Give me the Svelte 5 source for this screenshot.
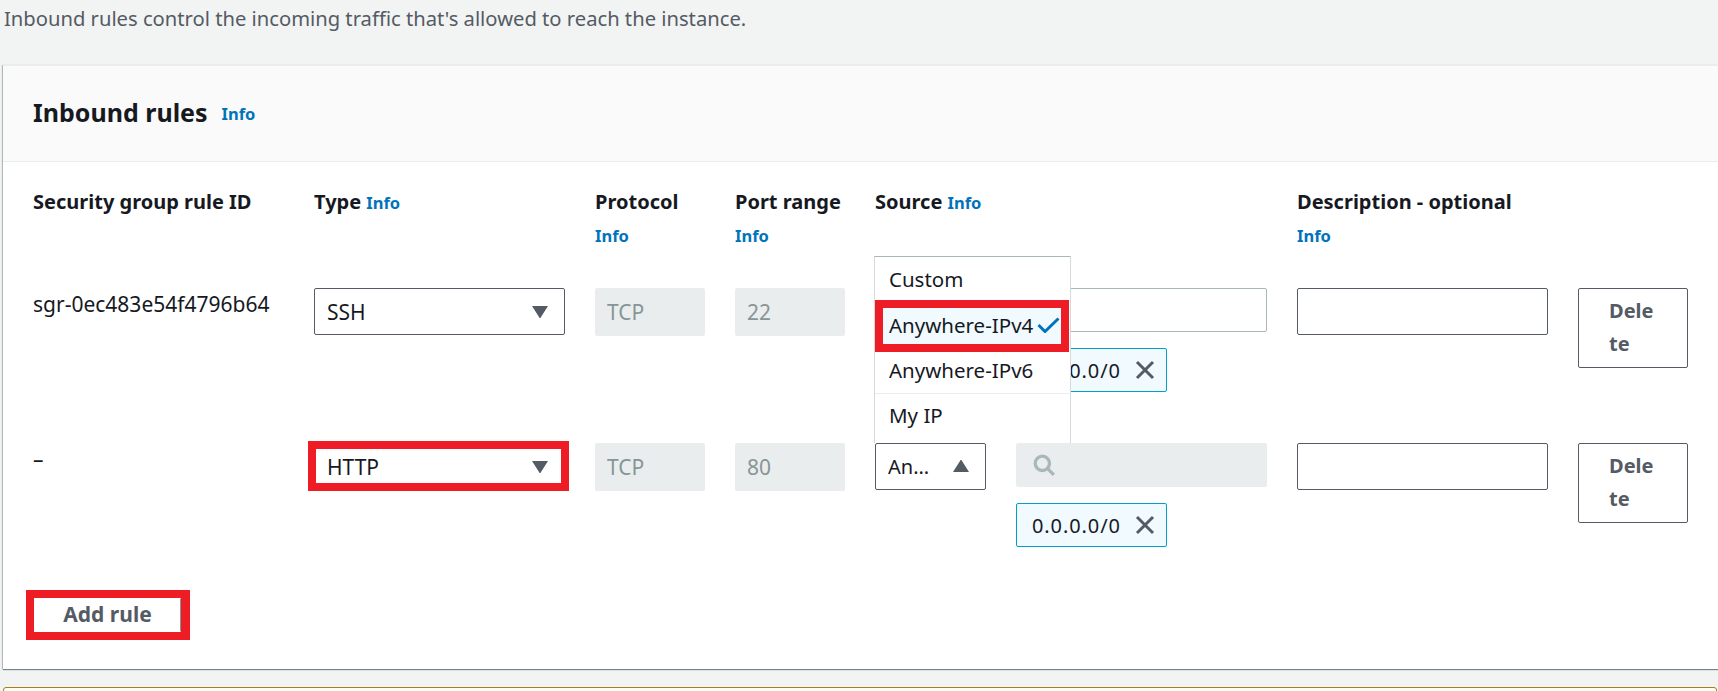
<script>
  const cols = [
    { label: 'Security group rule ID' },
    { label: 'Type', info: 'inline' },
    { label: 'Protocol', info: 'below' },
    { label: 'Port range', info: 'below' },
    { label: 'Source', info: 'inline' },
    { label: 'Description - optional', info: 'below' },
    { label: '' }
  ]

  const rules = [
    { id: 'sgr-0ec483e54f4796b64', type: 'SSH', port: '22', open: false, marked: false },
    { id: '–', type: 'HTTP', port: '80', open: true, marked: true }
  ]

  const sources = ['Custom', 'Anywhere-IPv4', 'Anywhere-IPv6', 'My IP']
</script>

<main class="page">
  <p class="intro">Inbound rules control the incoming traffic that's allowed to reach the instance.</p>

  <section class="card">
    <header class="card-head">
      <h2>Inbound rules</h2>
      <a class="info" href="#info">Info</a>
    </header>

    <div class="card-body">
      <div class="grid heads">
        {#each cols as col}
          <div class="col-head">
            <span class="col-label">{col.label}</span>
            {#if col.info === 'inline'}
              <a class="info" href="#info">Info</a>
            {:else if col.info === 'below'}
              <a class="info below" href="#info">Info</a>
            {/if}
          </div>
        {/each}
      </div>

      {#each rules as rule}
        <div class="grid rule">
          <div class="rule-id">{rule.id}</div>

          <div class="type-cell">
            <button class="select" type="button">
              <span>{rule.type}</span>
              <svg class="caret" viewBox="0 0 16 13" aria-hidden="true"><path d="M0 1h16L9 12a1 1 0 0 1-2 0z" /></svg>
            </button>
            {#if rule.marked}<span class="mark mark-type"></span>{/if}
          </div>

          <div class="readonly">TCP</div>
          <div class="readonly">{rule.port}</div>

          <div class="source">
            <div class="source-select">
              <button class="select source-btn" type="button">
                {#if rule.open}
                  <span>An...</span>
                  <svg class="caret" viewBox="0 0 16 13" aria-hidden="true"><path d="M0 12h16L9 1a1 1 0 0 0-2 0z" /></svg>
                {/if}
              </button>
              {#if rule.open}
                <ul class="menu">
                  {#each sources as source}
                    <li class:selected={source === 'Anywhere-IPv4'}>
                      {source}
                      {#if source === 'Anywhere-IPv4'}
                        <svg class="check" viewBox="0 0 23 16" aria-hidden="true"><path d="M1.5 8l6.5 6.5L21.5 1.5" /></svg>
                        <span class="mark mark-option"></span>
                      {/if}
                    </li>
                  {/each}
                </ul>
              {/if}
            </div>

            <div class="source-values">
              <div class="search" class:disabled={rule.open}>
                {#if rule.open}
                  <svg class="search-icon" viewBox="0 0 20 20" aria-hidden="true">
                    <circle cx="8.5" cy="8.5" r="6.5" />
                    <path d="M13.5 13.5L19 19" />
                  </svg>
                {/if}
              </div>
              <div class="token">
                <span>0.0.0.0/0</span>
                <svg class="dismiss" viewBox="0 0 20 20" aria-hidden="true"><path d="M2 2l16 16M18 2L2 18" /></svg>
              </div>
            </div>
          </div>

          <input class="description" type="text" aria-label="Description" />
          <button class="delete" type="button">Delete</button>
        </div>
      {/each}

      <div class="add-wrap">
        <button class="add" type="button">Add rule</button>
        <span class="mark mark-add"></span>
      </div>
    </div>
  </section>

  <div class="flash"></div>
</main>

<style>
  :global(body) {
    margin: 0;
    background: #f2f3f3;
  }

  .page {
    height: 691px;
    overflow: hidden;
    padding: 0 1px 0 3px;
    box-sizing: border-box;
    font-family: "Noto Sans", "Liberation Sans", sans-serif;
    font-size: 20px;
    color: #16191f;
  }

  .intro {
    margin: 0 0 0 1px;
    height: 65px;
    line-height: 36px;
    font-size: 20.2px;
    color: #545b64;
  }

  .card {
    background: #fff;
    height: 604px;
    margin-right: -1px;
    box-sizing: border-box;
    box-shadow: 0 1px 1px 0 rgba(0, 28, 36, 0.5), -1px 0 1px 0 rgba(0, 28, 36, 0.2);
  }

  .card-head {
    height: 97px;
    box-sizing: border-box;
    background: #fafafa;
    border-top: 1px solid #eaeded;
    border-bottom: 1px solid #eaeded;
    padding: 0 30px;
    display: flex;
    align-items: center;
    gap: 14px;
  }

  h2 {
    margin: -3px 0 0;
    font-size: 25px;
    font-weight: 700;
  }

  .info {
    color: #0073bb;
    font-size: 16.5px;
    font-weight: 700;
    text-decoration: none;
  }

  .card-body {
    padding: 23px 30px 0;
  }

  .grid {
    display: grid;
    grid-template-columns: 251px 251px 110px 110px 392px 251px 110px;
    column-gap: 30px;
  }

  .heads {
    height: 103px;
  }

  .col-head {
    line-height: 33px;
  }

  .col-label {
    font-weight: 700;
  }

  .info.below {
    display: block;
    margin-top: 1px;
  }

  .rule {
    margin-bottom: 51px;
    align-items: start;
  }

  .rule-id {
    line-height: 33px;
    font-size: 21px;
  }

  .type-cell {
    position: relative;
  }

  .select {
    width: 100%;
    height: 47px;
    box-sizing: border-box;
    display: flex;
    align-items: center;
    justify-content: space-between;
    padding: 0 16px 0 12px;
    background: #fff;
    border: 1px solid #545b64;
    border-radius: 2px;
    font: inherit;
    font-size: 21px;
    color: #16191f;
  }

  .source-btn {
    font-size: 20px;
  }

  .caret {
    width: 16px;
    height: 13px;
    fill: #545b64;
    flex-shrink: 0;
  }

  .readonly {
    height: 48px;
    box-sizing: border-box;
    padding: 0 12px;
    display: flex;
    align-items: center;
    background: #eaeded;
    border-radius: 2px;
    color: #879596;
    font-size: 21px;
  }

  .source {
    display: flex;
    gap: 30px;
  }

  .source-select {
    width: 111px;
    flex-shrink: 0;
    position: relative;
  }

  .menu {
    position: absolute;
    left: -1px;
    bottom: 100%;
    width: 197px;
    height: 187px;
    margin: 0;
    padding: 0;
    box-sizing: border-box;
    list-style: none;
    overflow: hidden;
    background: #fff;
    border: 1px solid #d5dbdb;
    border-top: 1px solid #aab7b8;
    border-bottom: 0;
    z-index: 2;
    font-size: 20.5px;
  }

  .menu li {
    position: relative;
    height: 46px;
    box-sizing: border-box;
    padding: 0 14px 2px;
    display: flex;
    align-items: center;
    justify-content: space-between;
    white-space: nowrap;
  }

  .menu li:nth-child(3) {
    height: 45px;
    border-bottom: 1px solid #eaeded;
  }

  .menu li:last-child {
    padding-bottom: 5px;
  }

  .menu li.selected {
    background: #f1faff;
    padding-right: 10px;
  }

  .check {
    width: 23px;
    height: 16px;
    fill: none;
    stroke: #0073bb;
    stroke-width: 3;
  }

  .source-values {
    width: 251px;
    display: flex;
    flex-direction: column;
    gap: 16px;
    align-items: flex-start;
  }

  .search {
    width: 100%;
    height: 44px;
    box-sizing: border-box;
    background: #fff;
    border: 1px solid #aab7b8;
    border-radius: 2px;
    display: flex;
    align-items: center;
    padding-left: 16px;
  }

  .search.disabled {
    background: #eaeded;
    border-color: #eaeded;
  }

  .search-icon {
    width: 22px;
    height: 22px;
    fill: none;
    stroke: #aab7b8;
    stroke-width: 3;
  }

  .token {
    width: 151px;
    height: 44px;
    box-sizing: border-box;
    display: flex;
    align-items: center;
    justify-content: space-between;
    padding: 0 11px 0 15px;
    background: #f1faff;
    border: 1px solid #00a1c9;
    border-radius: 2px;
    letter-spacing: 0.9px;
  }

  .dismiss {
    width: 20px;
    height: 20px;
    fill: none;
    stroke: #545b64;
    stroke-width: 3;
  }

  .description {
    height: 47px;
    box-sizing: border-box;
    margin: 0;
    padding: 0 12px;
    width: 100%;
    border: 1px solid #545b64;
    border-radius: 2px;
    background: #fff;
  }

  .delete {
    height: 80px;
    box-sizing: border-box;
    padding: 0 30px 2px;
    background: #fff;
    border: 1px solid #545b64;
    border-radius: 2px;
    font: inherit;
    font-weight: 700;
    line-height: 33px;
    color: #545b64;
    text-align: left;
    word-break: break-all;
  }

  .add-wrap {
    position: relative;
    width: 147px;
    height: 34px;
    margin-left: 1px;
  }

  .add {
    width: 100%;
    height: 100%;
    padding: 0 0 2px;
    background: #fff;
    border: 1px solid transparent;
    border-right-color: #879596;
    font: inherit;
    font-weight: 700;
    font-size: 21px;
    color: #545b64;
  }

  .mark {
    position: absolute;
    border: 8px solid #ee1c25;
    pointer-events: none;
  }

  .mark-type {
    inset: -2px -4px -1px -6px;
  }

  .mark-option {
    left: 0;
    right: 1px;
    top: -3px;
    bottom: -3px;
  }

  .mark-add {
    inset: -8px -9px -8px -8px;
    border-right-width: 9px;
  }

  .flash {
    height: 20px;
    margin-top: 18px;
    background: #fffef0;
    border: 1px solid #a57e1e;
    border-radius: 3px;
  }
</style>
